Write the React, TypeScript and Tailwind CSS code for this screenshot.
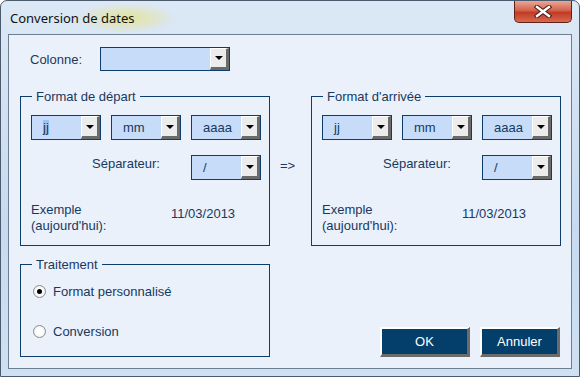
import type { ReactNode } from 'react';

const TEXT = "font-['Liberation_Sans',Arial,sans-serif] text-[13px] leading-[15px] text-[#17395f]";

function DropButton() {
  return (
    <div className="flex h-full w-[19px] items-center justify-center border-t border-l border-t-white border-l-white border-r-[3px] border-b-[3px] border-r-[#6a6a6a] border-b-[#6a6a6a] bg-[#ececec]">
      <div className="h-0 w-0 border-x-[4px] border-t-[4px] border-x-transparent border-t-black" />
    </div>
  );
}

function Combo({ value, className, selected }: { value?: string; className: string; selected?: boolean }) {
  return (
    <div className={`flex border border-[#0d3d6b] bg-[#c6dcf8] ${className}`}>
      <div className={`flex flex-1 items-center pl-[11px] ${TEXT}`}>
        {selected ? <span className="bg-[#9cc4f2]">{value}</span> : value}
      </div>
      <DropButton />
    </div>
  );
}

// fieldset keeps no padding so the legend sits at the same place in every group
function Group({ title, className, children }: { title: string; className: string; children: ReactNode }) {
  return (
    <fieldset className={`min-w-0 border border-[#0d3d6b] ${className}`}>
      <legend className={`ml-[11px] px-[4px] ${TEXT}`}>{title}</legend>
      {children}
    </fieldset>
  );
}

function FormatGroup({ title, first }: { title: string; first?: boolean }) {
  return (
    <Group title={title} className="h-[157px] w-[250px]">
      <div className="pl-[10px] pt-[11px]">
        <div className="flex gap-[10px]">
          <Combo value="jj" selected={first} className="h-[25px] w-[70px]" />
          <Combo value="mm" className="h-[25px] w-[70px]" />
          <Combo value="aaaa" className="h-[25px] w-[70px]" />
        </div>
        <div className="mt-[15px] flex w-[230px] items-start pl-[61px]">
          <span className={`pt-[1px] ${TEXT}`}>Séparateur:</span>
          <Combo value="/" className="ml-auto h-[25px] w-[70px]" />
        </div>
        <div className="mt-[22px] flex items-start">
          <div className={`w-[140px] leading-[16px] ${TEXT}`}>
            Exemple
            <br />
            (aujourd'hui):
          </div>
          <span className={`pt-[4px] ${TEXT}`}>11/03/2013</span>
        </div>
      </div>
    </Group>
  );
}

function Radio({ label, checked }: { label: string; checked?: boolean }) {
  return (
    <div className="flex items-center">
      <div className="flex h-[13px] w-[13px] items-center justify-center rounded-full border border-[#8c8c8c] bg-[radial-gradient(circle,#ffffff_40%,#e2e2e2)]">
        {checked && <div className="h-[5px] w-[5px] rounded-full bg-black" />}
      </div>
      <span className={`ml-[7px] ${TEXT}`}>{label}</span>
    </div>
  );
}

function DialogButton({ label, className }: { label: string; className: string }) {
  return (
    <button
      className={`flex h-[30px] items-center justify-center border-t-2 border-l-2 border-r-[3px] border-b-[3px] border-t-white border-l-white border-r-[#6b6b6b] border-b-[#6b6b6b] bg-[#043f6c] font-['Liberation_Sans',Arial,sans-serif] text-[13px] text-white ${className}`}
    >
      {label}
    </button>
  );
}

export default function App() {
  return (
    <div className="h-[377px] w-[580px] overflow-hidden rounded-t-[7px] border border-[#4b5b6d] bg-[linear-gradient(to_bottom,#dce8f5,#c7daef_60%,#cfe0f2)]">
      <div className="flex h-[33px] items-start justify-between bg-[radial-gradient(ellipse_50px_15px_at_125px_17px,rgba(232,226,120,0.75),transparent)]">
        <span className="pl-[9px] pt-[8px] font-['Noto_Sans',sans-serif] text-[13px] leading-[18px] text-[#111]">
          Conversion de dates
        </span>
        <div className="mr-[7px] flex h-[22px] w-[58px] items-center justify-center rounded-b-[5px] border border-t-0 border-[#5e2219] bg-[linear-gradient(to_bottom,#e9a795,#d3624b_45%,#c23b24_55%,#d66a50)]">
          <svg width="18" height="13" viewBox="0 0 18 13">
            <path d="M3 2 L15 11 M15 2 L3 11" stroke="#4a1d16" strokeWidth="4.5" strokeLinecap="square" />
            <path d="M3 2 L15 11 M15 2 L3 11" stroke="#ffffff" strokeWidth="2.4" strokeLinecap="square" />
          </svg>
        </div>
      </div>

      <div className="ml-[7px] h-[335px] w-[564px] border border-[#6e7f92] bg-[#eaf1fb] pt-[12px]">
        <div className="flex items-center">
          <span className={`ml-[21px] w-[70px] ${TEXT}`}>Colonne:</span>
          <Combo className="h-[24px] w-[130px]" />
        </div>

        <div className="mt-[18px] flex items-start pl-[11px]">
          <FormatGroup title="Format de départ" first />
          <div className={`w-[41px] pl-[10px] pt-[69px] ${TEXT}`}>=&gt;</div>
          <FormatGroup title="Format d'arrivée" />
        </div>

        <div className="mt-[11px] flex items-end pl-[11px] pr-[11px]">
          <Group title="Traitement" className="h-[100px] w-[250px]">
            <div className="flex flex-col gap-[25px] pl-[12px] pt-[12px]">
              <Radio label="Format personnalisé" checked />
              <Radio label="Conversion" />
            </div>
          </Group>
          <div className="flex flex-1 justify-end gap-[10px]">
            <DialogButton label="OK" className="w-[90px]" />
            <DialogButton label="Annuler" className="w-[80px]" />
          </div>
        </div>
      </div>
    </div>
  );
}
